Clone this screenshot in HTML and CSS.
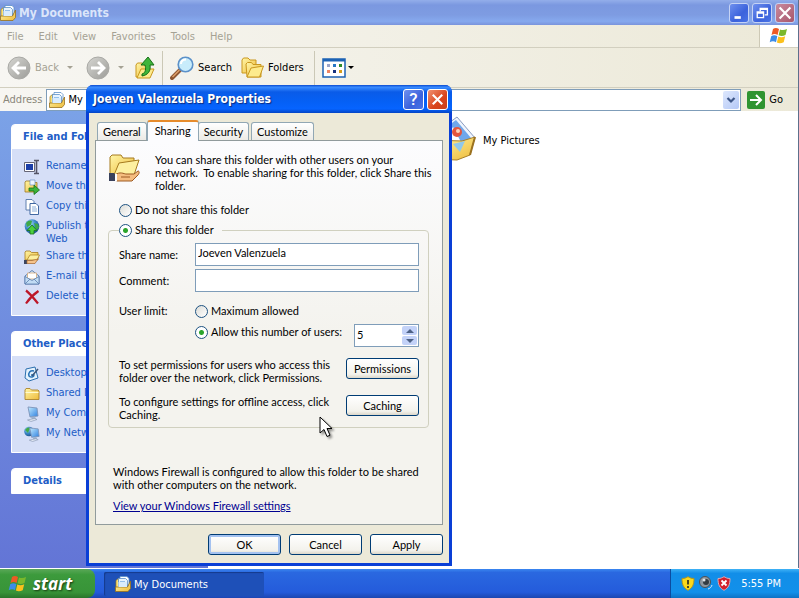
FILE: index.html
```html
<!DOCTYPE html>
<html lang="en">
<head>
<meta charset="utf-8">
<title>My Documents</title>
<link rel="stylesheet" href="styles.css">
</head>
<body>
<svg class="defs" aria-hidden="true">
  <defs>
    <linearGradient id="gold" x1="0" y1="0" x2="1" y2="1"><stop offset="0" stop-color="#fff6a8"/><stop offset="1" stop-color="#eebb3a"/></linearGradient>
    <linearGradient id="grey" x1="0" y1="0" x2="1" y2="1"><stop offset="0" stop-color="#d6d6d2"/><stop offset="1" stop-color="#9c9c98"/></linearGradient>
    <radialGradient id="globe" cx=".35" cy=".3" r=".8"><stop offset="0" stop-color="#a8e0f8"/><stop offset=".5" stop-color="#3a86c8"/><stop offset="1" stop-color="#164a80"/></radialGradient>
    <linearGradient id="screen" x1="0" y1="0" x2="1" y2="1"><stop offset="0" stop-color="#c4ecff"/><stop offset="1" stop-color="#2c7fe0"/></linearGradient>
    <symbol id="docs" viewBox="0 0 16 16">
      <path d="M1 4.500 4 2v10H1z" fill="#fae27a" stroke="#a17a1c" stroke-width=".7"/>
      <path d="M5 .5h7l2 2V9H5z" fill="#fff" stroke="#5a8fc8" stroke-width=".8"/>
      <path d="M3.500 2.500h7l2 2V12h-9z" fill="#e8f4ff" stroke="#5a8fc8" stroke-width=".8"/>
      <path d="M5 5.500h5M5 7.500h6M5 9.500h6" stroke="#7fb2e6" stroke-width=".8"/>
      <path d="M.5 11h12l3-6v7.500L13 15.500H.5z" fill="url(#gold)" stroke="#97701c" stroke-width=".8"/>
      <path d="M3.500 6h8.500v5H3.500z" fill="#d9ecfd"/>
    </symbol>
    <symbol id="folder" viewBox="0 0 16 16">
      <path d="M1 13.500V4l1-1.500h4L7.500 4H14l1 1v8.500z" fill="url(#gold)" stroke="#ad842b" stroke-width=".9"/>
      <path d="M1.500 6.500h13" stroke="#fffbd0"/>
    </symbol>
    <symbol id="flag" viewBox="0 0 20 18">
      <path d="M4 2C6 .6 8 .8 10 2L8.600 8C6.600 6.800 4.600 6.800 2.500 8z" fill="#ee5a24"/>
      <path d="M11 2.400c2 1 4.500 1 7-.4L16.500 8c-2.500 1.200-4.700 1.300-6.900.3z" fill="#7ab82c"/>
      <path d="M2.200 9.200c2-1.300 4-1.300 6.100-.1L7 15.200c-2-1.200-4.100-1.200-6.300.1z" fill="#3c8ce8"/>
      <path d="M9.300 9.500c2.200 1 4.400.9 6.900-.3l-1.500 6c-2.500 1.300-4.600 1.300-6.800.4z" fill="#fbc01c"/>
    </symbol>
    <symbol id="folders" viewBox="0 0 24 22">
      <path d="M1 16V3l1.500-2H7l2 2h6v13z" fill="url(#gold)" stroke="#c9971f"/>
      <path d="m6 20-1-13 1.500-1.500h4l1.500 2h8V20z" fill="url(#gold)" stroke="#c9971f"/>
      <path d="m6 20 4-9 12.500-2-4 11z" fill="#fdeb8d" stroke="#c9971f"/>
    </symbol>
    <symbol id="computer" viewBox="0 0 16 16">
      <path d="m4 1 9 1 1 8-8 1z" fill="url(#screen)" stroke="#7d93b8" stroke-width=".9"/>
      <path d="m7 11 4-.4 1 2.400-4 .6z" fill="#9db2cf"/><path d="m3.500 14 7-1.500 2.500 1-6 2z" fill="#dfe6f2" stroke="#8292ad" stroke-width=".6"/>
    </symbol>
    <symbol id="shield" viewBox="0 0 14 15"><path d="M1 2.500C4 2.500 5.500 1.500 7 .700 8.500 1.500 10 2.500 13 2.500c0 6-1.500 9.500-6 11.800C2.500 12 1 8.500 1 2.500z"/></symbol>
  </defs>
</svg>

<div class="desktop">
  <main class="explorer">
    <header class="caption">
      <svg class="i16"><use href="#docs"/></svg>
      <h1>My Documents</h1>
      <button class="win-btn" aria-label="Minimize"><svg viewBox="0 0 20 20"><path d="M5 15h7" stroke="#fff" stroke-width="3"/></svg></button>
      <button class="win-btn" aria-label="Restore"><svg viewBox="0 0 20 20"><path d="M8 8V5h8v7h-3M8 6h8" fill="none" stroke="#fff" stroke-width="1.500"/><path d="M4.700 8.700h7v6.500h-7zM5 10h7" fill="none" stroke="#fff" stroke-width="1.500"/></svg></button>
      <button class="win-btn close" aria-label="Close"><svg viewBox="0 0 20 20"><path d="m4 4 12 12M16 4 4 16" stroke="#fff" stroke-width="2.400"/></svg></button>
    </header>

    <nav class="menubar">
      <button>File</button><button>Edit</button><button>View</button><button>Favorites</button><button>Tools</button><button>Help</button>
      <span class="brand"><svg viewBox="0 0 20 18"><use href="#flag"/></svg></span>
    </nav>

    <div class="toolbar">
      <button class="tool back off"><svg viewBox="0 0 24 24"><circle cx="12" cy="12" r="11" fill="url(#grey)" stroke="#a9a9a5"/><path d="M19 12H6m6-6-6 6 6 6" fill="none" stroke="#fff" stroke-width="2.800"/></svg>Back</button>
      <span class="arrow off"></span>
      <button class="tool forward off" aria-label="Forward"><svg viewBox="0 0 24 24"><circle cx="12" cy="12" r="11" fill="url(#grey)" stroke="#a9a9a5"/><path d="M5 12h13m-6-6 6 6-6 6" fill="none" stroke="#fff" stroke-width="2.800"/></svg></button>
      <span class="arrow off"></span>
      <button class="tool up" aria-label="Up"><svg viewBox="0 0 24 24"><path d="M3 21V9l1.500-2H9l2 2h5v12z" fill="url(#gold)" stroke="#c9971f"/><path d="m4 22 4-9h13l-4 9z" fill="#fdeb8d" stroke="#c9971f"/><path d="M9 18c4-1 4-6 3-9H8l7-8 6 8h-4c1 6-2 10-8 11z" fill="#3fb53a" stroke="#166f16"/></svg></button>
      <span class="rule"></span>
      <button class="tool search"><svg viewBox="0 0 24 24"><path d="m2 22 8-8" stroke="#8c5632" stroke-width="4" stroke-linecap="round"/><path d="m2.500 21 7-7" stroke="#e0a26c" stroke-width="1.500"/><circle cx="15.500" cy="8.500" r="7.300" fill="#c8ecfb" stroke="#5c91c9" stroke-width="1.600"/><path d="M11 8c0-3 2-4.500 5-4.500" fill="none" stroke="#fff" stroke-width="2"/></svg>Search</button>
      <button class="tool folders"><svg viewBox="0 0 24 22"><use href="#folders"/></svg>Folders</button>
      <span class="rule"></span>
      <button class="tool views" aria-label="Views"><svg viewBox="0 0 24 20"><path d="M1 1h22v18H1z" fill="#fff" stroke="#1c62b4" stroke-width="1.500"/><path d="M1 1h22v2.500H1z" fill="#1c62b4"/><path d="M5 6h3v3H5z" fill="#9aa4c8"/><path d="M11 6h3v3h-3z" fill="#2777c4"/><path d="M17 6h3v3h-3z" fill="#2e8a2a"/><path d="M5 12h3v3H5z" fill="#ee8462"/><path d="M11 12h3v3h-3z" fill="#15327e"/><path d="M17 12h3v3h-3z" fill="#d69c1c"/></svg></button>
      <span class="arrow"></span>
    </div>

    <div class="address">
      <label for="path">Address</label>
      <div class="combo">
        <svg class="i16"><use href="#docs"/></svg>
        <select id="path"><option>My Documents</option></select>
        <span class="drop"><svg viewBox="0 0 16 18"><path d="m4.500 7 3.500 3.500L11.500 7" fill="none" stroke="#3d5687" stroke-width="2.200"/></svg></span>
      </div>
      <button class="go"><svg viewBox="0 0 18 18"><rect width="18" height="18" rx="2" fill="#2f9431"/><path d="M3 9h10M9 4l5 5-5 5" fill="none" stroke="#fff" stroke-width="2"/></svg>Go</button>
    </div>

    <div class="body">
      <aside class="side">
        <section class="card">
          <h2>File and Folder Tasks</h2>
          <ul>
            <li><svg class="i16" viewBox="0 0 16 16"><path d="M.5 3.500h10v9H.5z" fill="#fff" stroke="#667"/><path d="M2 5h7v6H2z" fill="#1c3fa8"/><path d="M10 1.500h5M10 14.500h5M12.500 1.500v13" stroke="#556" stroke-width="1.600"/></svg><a href="#">Rename this folder</a></li>
            <li><svg class="i16" viewBox="0 0 16 16"><path d="M1 13V3l1-1h4l1 1.500h6V13z" fill="url(#gold)" stroke="#9c7826" stroke-width=".8"/><path d="M6 1h5v5H6z" fill="#eef6ff" stroke="#6d92c4" stroke-width=".7"/><path d="M5 9h5V6l5.500 5-5.500 4.500V12H5z" fill="#3cb43a" stroke="#176e19" stroke-width=".8"/></svg><a href="#">Move this folder</a></li>
            <li><svg class="i16" viewBox="0 0 16 16"><path d="M2 .5h6l2 2V11H2z" fill="#fff" stroke="#5f7fae"/><path d="M6 4.500h6l2.500 2.500v8.500H6z" fill="#fff" stroke="#4268a2"/><path d="M8 8h4M8 10h5M8 12h5" stroke="#8daed8"/></svg><a href="#">Copy this folder</a></li>
            <li><svg class="i16" viewBox="0 0 16 16"><circle cx="8" cy="7.500" r="7.300" fill="url(#globe)"/><path d="M2 4c2-3 5-3 6-2L7 6 3 8zM10 4l4 1 1 4-3 2z" fill="#3fa849"/><path d="m8 6 5 5.500h-3V15H6v-3.500H3z" fill="#4cd03e" stroke="#16721a" stroke-width=".8"/></svg><a href="#">Publish this folder to the Web</a></li>
            <li><svg class="i16" viewBox="0 0 16 16"><path d="M1 11V3l1-1h4l1.500 1.500H14V11z" fill="url(#gold)" stroke="#a67b1e" stroke-width=".8"/><path d="m3 11 3-5h9.500L13 11z" fill="#fdf0a0" stroke="#a67b1e" stroke-width=".7"/><path d="M0 11h3v4H0z" fill="#3c4560"/><path d="M3 11.500h5l6-1.500-3 4.500H3z" fill="#f6c48c" stroke="#a5662c" stroke-width=".7"/></svg><a href="#">Share this folder</a></li>
            <li><svg class="i16" viewBox="0 0 16 16"><path d="m1 7 7-5.500L15 7v8H1z" fill="#dcebfa" stroke="#5c7fae"/><path d="M3.500 4h9v6h-9z" fill="#fff" stroke="#d4a878" stroke-width=".8"/><path d="m1 7.500 7 4 7-4V15H1z" fill="#c1dcf4" stroke="#5c7fae" stroke-width=".8"/><path d="m1 15 5-5M15 15l-5-5" stroke="#5c7fae" stroke-width=".8"/></svg><a href="#">E-mail this folder's files</a></li>
            <li><svg class="i16" viewBox="0 0 16 16"><path d="M2 1.500c4 3 8 8 12 13M14.500 2C10 5 5 10 2 14.500" fill="none" stroke="#bd1628" stroke-width="2.200"/></svg><a href="#">Delete this folder</a></li>
          </ul>
        </section>
        <section class="card">
          <h2>Other Places</h2>
          <ul>
            <li><svg class="i16" viewBox="0 0 16 16"><path d="m2 3 9-2 3 11-9 3-4-3z" fill="#e4f2fd" stroke="#2b6fae"/><path d="M10 5C6 4 4 7 5 10c2 2 5 1 5-1H7" fill="none" stroke="#2873b6" stroke-width="1.500"/><path d="m8 10 6-7" stroke="#3a5678" stroke-width="1.500"/></svg><a href="#">Desktop</a></li>
            <li><svg class="i16"><use href="#folder"/></svg><a href="#">Shared Documents</a></li>
            <li><svg class="i16"><use href="#computer"/></svg><a href="#">My Computer</a></li>
            <li><svg class="i16" viewBox="0 0 16 16"><circle cx="5" cy="5.500" r="4.800" fill="url(#globe)"/><path d="M1 4c2-3 4-3 5-2L4 7z" fill="#43a948"/><use href="#computer" x="2" y="1" width="15" height="15"/></svg><a href="#">My Network Places</a></li>
          </ul>
        </section>
        <section class="card"><h2>Details</h2></section>
      </aside>

      <div class="files">
        <a class="file" href="#"><svg viewBox="0 0 48 48"><path d="M2 44V8l4-5h12l4 5h22v36z" fill="url(#gold)" stroke="#ad842b"/></svg>My Music</a>
        <a class="file" href="#"><svg viewBox="0 0 48 48"><path d="M14 12 29 1 47 22 36 36 14 32z" fill="#eef4fd" stroke="#8a9cc0"/><path d="m16 13 12-9 15 18-8 8-18-2z" fill="#6fa7ea"/><path d="m17 24 8-13 8 15z" fill="#fff"/><circle cx="29" cy="16" r="5" fill="#e4553e"/><circle cx="30" cy="15" r="2" fill="#ffd2b8"/><path d="m4 24 30 1 13-4-5 18-13 5-25-1z" fill="url(#gold)" stroke="#a87f28"/><path d="m25 28 12-3-5 11z" fill="#8fc8ec"/><path d="m42 39 5-18" stroke="#9b7221" stroke-width="2"/></svg>My Pictures</a>
      </div>
    </div>
  </main>

  <section class="dialog" role="dialog" aria-labelledby="dlg-title">
    <header class="dialog-caption">
      <h2 id="dlg-title">Joeven Valenzuela Properties</h2>
      <button class="win-btn help" aria-label="Help">?</button>
      <button class="win-btn close" aria-label="Close"><svg viewBox="0 0 20 20"><path d="m5 5 10 10M15 5 5 15" stroke="#fff" stroke-width="2.200"/></svg></button>
    </header>
    <form class="dialog-body">
      <div class="tabs" role="tablist">
        <button type="button" role="tab">General</button>
        <button type="button" role="tab" class="active" aria-selected="true">Sharing</button>
        <button type="button" role="tab">Security</button>
        <button type="button" role="tab">Customize</button>
      </div>
      <div class="panel">
        <div class="intro">
          <svg viewBox="0 0 32 32"><path d="M2 22V4l2-2h9l2 3h11v17z" fill="url(#gold)" stroke="#a67b1e"/><path d="m6 22 5-12 20-3-5 15z" fill="#fdf0a0" stroke="#a67b1e"/><path d="M7 22c5-4 9-1 11-1h8l4-3c2 0 1 3 0 4l-6 6H9l-3-2z" fill="#f5bd80" stroke="#9d5a22"/><path d="M13 24h9" stroke="#9d5a22"/><path d="M1 20h5l2 2v6H1z" fill="#39415c"/><path d="M7 21h2v7H7z" fill="#fff"/></svg>
          <p>You can share this folder with other users on your network.&nbsp; To enable sharing for this folder, click Share this folder.</p>
        </div>
        <label class="choice outer"><input type="radio" name="share">Do not share this folder</label>
        <fieldset>
          <legend><label class="choice"><input type="radio" name="share" checked>Share this folder</label></legend>
          <div class="fields">
            <label for="sname">Share name:</label>
            <input id="sname" class="text" type="text" value="Joeven Valenzuela">
            <label for="comment">Comment:</label>
            <input id="comment" class="text" type="text">
          </div>
          <div class="limit">
            <span>User limit:</span>
            <div class="limit-options">
              <label class="choice"><input type="radio" name="limit">Maximum allowed</label>
              <div class="allow">
                <label class="choice"><input type="radio" name="limit" checked>Allow this number of users:</label>
                <div class="spin">
                  <input type="text" value="5" aria-label="Number of users">
                  <div class="steps">
                    <button type="button" aria-label="More"><svg viewBox="0 0 8 4"><path d="m0 4 4-4 4 4z"/></svg></button>
                    <button type="button" aria-label="Fewer"><svg viewBox="0 0 8 4"><path d="m0 0 4 4 4-4z"/></svg></button>
                  </div>
                </div>
              </div>
            </div>
          </div>
          <div class="action"><p>To set permissions for users who access this folder over the network, click Permissions.</p><button type="button" class="push">Permissions</button></div>
          <div class="action"><p>To configure settings for offline access, click Caching.</p><button type="button" class="push">Caching</button></div>
        </fieldset>
        <div class="firewall">
          <p>Windows Firewall is configured to allow this folder to be shared with other computers on the network.</p>
          <a href="#">View your Windows Firewall settings</a>
        </div>
      </div>
      <div class="buttons">
        <button type="button" class="push default">OK</button>
        <button type="button" class="push">Cancel</button>
        <button type="button" class="push">Apply</button>
      </div>
    </form>
  </section>

  <footer class="taskbar">
    <button class="start"><svg viewBox="0 0 20 18"><use href="#flag"/></svg>start</button>
    <button class="task"><svg class="i16"><use href="#docs"/></svg>My Documents</button>
    <div class="tray">
      <svg viewBox="0 0 14 15"><use href="#shield" fill="#fbd81c" stroke="#b09520"/><path d="M7 4v4.500M7 10v2" stroke="#222" stroke-width="1.600"/></svg>
      <svg viewBox="0 0 14 15"><circle cx="6" cy="6" r="5.500" fill="#8e979f" stroke="#4a5157"/><circle cx="7" cy="6" r="3" fill="#333b42"/><circle cx="5" cy="4" r="1.500" fill="#dfe5ea"/><path d="M9 13c2-.5 3.500-2 4-4" fill="none" stroke="#d9e9fb"/></svg>
      <svg viewBox="0 0 14 15"><use href="#shield" fill="#d3202c" stroke="#dfa9b4"/><path d="m4.500 4.500 5 5M9.500 4.500l-5 5" stroke="#fff" stroke-width="1.800"/></svg>
      <time>5:55 PM</time>
    </div>
  </footer>

  <svg class="cursor" viewBox="0 0 14 22" aria-hidden="true"><path d="M1 1v16l4-3.500 3 7 3-1.300-3-6.700h5z" fill="#fff" stroke="#000"/></svg>
</div>
</body>
</html>
```
FILE: styles.css
```css
* { box-sizing: border-box; }

body {
  margin: 0;
  font: 11px/13px "DejaVu Sans Condensed", "DejaVu Sans", sans-serif;
  color: #000;
}

h1, h2, p, ul { margin: 0; padding: 0; }
ul { list-style: none; }
button, input, select { font: inherit; color: inherit; }
button { margin: 0; padding: 0; border: 0; background: none; white-space: nowrap; }
svg { display: block; flex: none; }
.defs { position: absolute; width: 0; height: 0; }
.i16 { width: 16px; height: 16px; }

.desktop {
  position: relative;
  display: flex;
  flex-direction: column;
  height: 100vh;
  overflow: hidden;
}

/* Explorer window */
.explorer {
  flex: 1;
  min-height: 0;
  display: flex;
  flex-direction: column;
  background: #ece9d8;
  border-right: 1px solid #5c708c;
}

.caption {
  display: flex;
  align-items: center;
  gap: 3px;
  height: 25px;
  padding-right: 3px;
  background: linear-gradient(#93aeea, #7b98e0 20%, #7e9ce2 60%, #86a9ee 85%, #7a94dc);
}
.caption h1 {
  flex: 1;
  font: bold 12px/20px "DejaVu Sans Condensed", sans-serif;
  color: #dbe5fa;
}

.win-btn {
  width: 20px;
  height: 20px;
  border: 1px solid #c5d3f5;
  border-radius: 3px;
  background: linear-gradient(135deg, #6f90ee, #3b62dc 60%, #4a74e6);
}
.win-btn svg { width: 18px; height: 18px; }
.caption .close { background: linear-gradient(135deg, #c98a9e, #a8566c); }

.menubar {
  display: flex;
  align-items: center;
  gap: 15px;
  height: 23px;
  padding-left: 7px;
  color: #a5a294;
  background: linear-gradient(90deg, #f7f6f2, #ece9d8);
  border-bottom: 1px solid #d2cfbf;
}
.brand {
  align-self: stretch;
  width: 39px;
  margin-left: auto;
  display: grid;
  place-items: center;
  background: #fff;
  border-left: 1px solid #cdc9b6;
}
.brand svg { width: 20px; height: 18px; }

.toolbar {
  display: flex;
  align-items: center;
  height: 40px;
  padding-left: 7px;
  background: linear-gradient(90deg, #f7f6f2, #ece9d8);
  border-bottom: 1px solid #d2cfbf;
}
.tool { display: flex; align-items: center; gap: 4px; }
.tool svg { width: 24px; height: 24px; }
.off { color: #a5a294; }
.arrow {
  margin: 0 13px 0 8px;
  border: 3px solid transparent;
  border-top-color: currentColor;
  border-bottom: 0;
}
.up { margin-left: -4px; }
.rule { width: 1px; height: 34px; margin: 0 7px 0 5px; background: #cbc8b6; }
.folders { gap: 3px; margin-left: 9px; }
.folders + .rule { margin-left: 10px; }
.views + .arrow { margin-left: 2px; }

.address {
  display: flex;
  align-items: center;
  gap: 4px;
  height: 23px;
  padding-left: 3px;
  background: linear-gradient(90deg, #f7f6f2, #ece9d8);
}
.address > label { color: #8a877a; }
.combo {
  flex: 1;
  display: flex;
  align-items: center;
  height: 22px;
  padding: 1px 1px 1px 2px;
  background: #fff;
  border: 1px solid #7f9db9;
}
.combo select {
  flex: 1;
  appearance: none;
  padding: 0 3px;
  border: 0;
  background: none;
  outline: 0;
}
.drop {
  width: 16px;
  height: 18px;
  border-radius: 2px;
  background: linear-gradient(135deg, #dde7fd, #b4c8f6);
}
.go { display: flex; align-items: center; gap: 4px; margin-left: 2px; padding-right: 15px; }
.go svg { width: 18px; height: 18px; }

.body { flex: 1; min-height: 0; display: flex; }

.side {
  width: 208px;
  padding: 13px 12px 0 11px;
  display: flex;
  flex-direction: column;
  gap: 15px;
  overflow: hidden;
  background: linear-gradient(#7ba2e7, #6375d6);
}
.card {
  border: 1px solid #fff;
  border-radius: 4px 4px 0 0;
  background: #d6dff7;
}
.card h2 {
  padding-left: 11px;
  font: bold 11px/24px "DejaVu Sans Condensed", sans-serif;
  color: #215dc6;
  background: #fff;
  border-radius: 3px 3px 0 0;
}
.card ul {
  display: flex;
  flex-direction: column;
  gap: 3px;
  padding: 9px 8px 10px 12px;
}
.card li { display: flex; gap: 6px; }
.card li a { padding-top: 1px; }
.card li svg { margin-top: 1px; }
.card a { color: #215dc6; text-decoration: none; line-height: 13px; }

.files {
  flex: 1;
  display: grid;
  grid-template-columns: 208px 1fr;
  align-content: start;
  padding: 5px 0 0 12px;
  background: #fff;
}
.file { display: flex; align-items: center; gap: 7px; color: #000; text-decoration: none; }
.file svg { width: 48px; height: 48px; }

/* Properties dialog */
.dialog {
  position: absolute;
  top: 85px;
  left: 86px;
  width: 366px;
  border: 3px solid #0a3fd6;
  border-top: 0;
  border-radius: 7px 7px 0 0;
  background: #0a3fd6;
  font-family: Lato, "Liberation Sans", sans-serif;
}
.dialog-caption {
  display: flex;
  align-items: center;
  gap: 3px;
  height: 28px;
  margin: 0 -3px;
  padding: 0 4px 0 7px;
  border-radius: 7px 7px 0 0;
  background: linear-gradient(#0a4ad0, #3a8cff 8%, #0a5be8 25%, #0560f5 60%, #0664ff 85%, #0344c4);
}
.dialog-caption h2 {
  flex: 1;
  font: bold 12px/20px "DejaVu Sans Condensed", sans-serif;
  color: #fff;
  text-shadow: 1px 1px 1px #0a2a80;
}
.dialog-caption .win-btn { width: 21px; height: 21px; border-color: #fff; }
.dialog-caption .win-btn svg { width: 19px; height: 19px; }
.dialog-caption .close { background: linear-gradient(135deg, #f09070, #d9441c 60%, #c8401c); }
.dialog-caption .help { color: #fff; font-family: Roboto, sans-serif; font-size: 17px; font-weight: 500; line-height: 18px; }

.dialog-body { padding: 7px 6px 8px; background: #ece9d8; }

.tabs { display: flex; align-items: flex-end; height: 20px; padding-left: 2px; }
.tabs button {
  height: 18px;
  margin-right: 2px;
  padding: 0 5px;
  border: 1px solid #91a7b4;
  border-bottom: 0;
  border-radius: 3px 3px 0 0;
  background: linear-gradient(#fff, #ecebe6);
}
.tabs .active {
  z-index: 1;
  height: 21px;
  margin: 0 -1px -1px -2px;
  padding: 0 7px 3px;
  border-top: 2px solid #e68b2c;
  background: #fcfcfe;
}

.panel {
  padding: 12px 13px 12px 12px;
  border: 1px solid #919b9c;
  background: linear-gradient(#fcfcfe, #f4f3ee 50%);
}
.intro { display: flex; gap: 15px; min-height: 39px; margin-right: -8px; }
.intro svg { width: 32px; height: 32px; }

.choice { display: flex; align-items: center; gap: 3px; line-height: 16px; white-space: nowrap; }
.choice input {
  appearance: none;
  flex: none;
  width: 13px;
  height: 13px;
  margin: 0;
  border: 1px solid #1d5281;
  border-radius: 50%;
  background: linear-gradient(135deg, #dcdcd7, #fff);
}
.choice input:checked { background: radial-gradient(circle, #2ca52c 0 2px, #fff 3px); }
.outer { margin: 10px 0 4px 11px; }

fieldset {
  min-width: 0;
  margin: 0;
  padding: 5px 9px 6px 10px;
  border: 1px solid #d0d0bf;
  border-radius: 4px;
}
legend { padding: 0 8px 0 0; }
.fields {
  display: grid;
  grid-template-columns: 76px 1fr;
  row-gap: 3px;
  align-items: center;
}
.text, .spin {
  height: 23px;
  min-width: 0;
  border: 1px solid #7f9db9;
  background: #fff;
}
.text { padding: 0 2px 4px; }
.limit { display: grid; grid-template-columns: 76px 1fr; margin-top: 11px; line-height: 16px; }
.limit-options { display: flex; flex-direction: column; gap: 5px; }
.allow { display: flex; justify-content: space-between; align-items: flex-start; }
.spin { display: flex; width: 65px; padding: 1px; }
.spin input {
  flex: 1;
  min-width: 0;
  padding: 0 1px 2px;
  border: 0;
  background: none;
}
.steps { display: flex; flex-direction: column; gap: 1px; width: 15px; }
.steps button {
  flex: 1;
  display: grid;
  place-items: center;
  border-radius: 2px;
  background: #c3d2f8;
}
.steps svg { width: 8px; height: 4px; fill: #4d6185; }

.action { display: flex; justify-content: space-between; align-items: flex-start; margin-top: 11px; }
.action p { width: 220px; }
.push {
  width: 73px;
  height: 21px;
  border: 1px solid #003c74;
  border-radius: 3px;
  background: linear-gradient(#fff, #f3f2ec 80%, #dcd7ca);
}
.push.default { box-shadow: inset 0 0 0 2px #a4c2f0; }

.firewall { padding: 37px 5px 0; }
.firewall a { display: inline-block; margin-top: 8px; color: #000090; }
.buttons { display: flex; justify-content: flex-end; gap: 8px; padding-top: 9px; }

/* Taskbar */
.taskbar {
  display: flex;
  height: 30px;
  border-top: 1px solid #fff;
  color: #fff;
  background: linear-gradient(#3a86f0, #2a68e0 12%, #245bdb 80%, #1c46b0);
}
.start {
  display: flex;
  align-items: center;
  gap: 5px;
  width: 95px;
  padding-left: 8px;
  border-radius: 0 8px 8px 0;
  font: italic bold 17px/20px "Open Sans", sans-serif;
  text-shadow: 1px 1px 2px #163a10;
  background: linear-gradient(#5aa858, #3c9a3c 20%, #389438 80%, #2a752a);
}
.start svg { width: 20px; height: 18px; }
.task {
  display: flex;
  align-items: center;
  gap: 3px;
  width: 160px;
  margin: 3px 0 2px 9px;
  padding-left: 11px;
  border-radius: 2px;
  background: #1e50b8;
  box-shadow: inset 1px 1px 1px #143a8c;
}
.tray {
  display: flex;
  align-items: center;
  gap: 4px;
  margin-left: auto;
  padding: 0 18px 0 10px;
  border-left: 1px solid #0c4ca0;
  background: linear-gradient(#3fb2f6, #128ee8 15%, #1290ea 80%, #0e72c4);
}
.tray svg { width: 14px; height: 15px; }
.tray time { margin-left: 6px; }

.cursor {
  position: absolute;
  top: 416px;
  left: 319px;
  width: 14px;
  height: 22px;
  filter: drop-shadow(2px 2px 1px #0006);
}
```
